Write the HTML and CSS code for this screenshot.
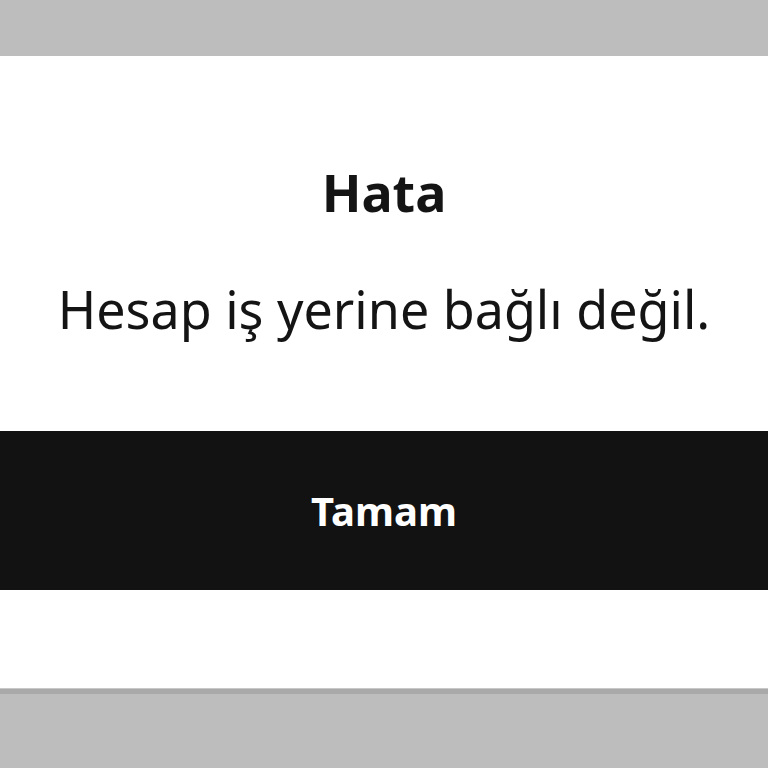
FILE: index.html
```html
<!DOCTYPE html>
<html lang="tr">
<head>
<meta charset="utf-8">
<link rel="stylesheet" href="styles.css">
</head>
<body>
<div class="dialog">
  <h1 class="title">Hata</h1>
  <p class="message">Hesap iş yerine bağlı değil.</p>
  <button class="ok">Tamam</button>
</div>
</body>
</html>
```
FILE: styles.css
```css
html, body {
  margin: 0;
  padding: 0;
  background: #bdbdbd;
  font-family: "Noto Sans", "Open Sans", sans-serif;
}
.dialog {
  margin-top: 56px;
  background: #fff;
  padding: 104px 0 99px;
  border-bottom: 5px solid #a9a9a9;
  box-shadow: inset 0 -1px 0 #c8c8c8;
  display: flex;
  flex-direction: column;
  align-items: stretch;
}
.title {
  margin: 0;
  font-size: 52px;
  line-height: 64px;
  font-weight: 700;
  color: #141414;
  text-align: center;
}
.message {
  margin: 53px 0 0;
  font-size: 52px;
  line-height: 64px;
  font-weight: 400;
  color: #141414;
  text-align: center;
}
.ok {
  margin-top: 90px;
  height: 159px;
  border: 0;
  background: #121212;
  color: #fff;
  font-family: inherit;
  font-size: 40px;
  font-weight: 700;
  padding: 0;
}
```
